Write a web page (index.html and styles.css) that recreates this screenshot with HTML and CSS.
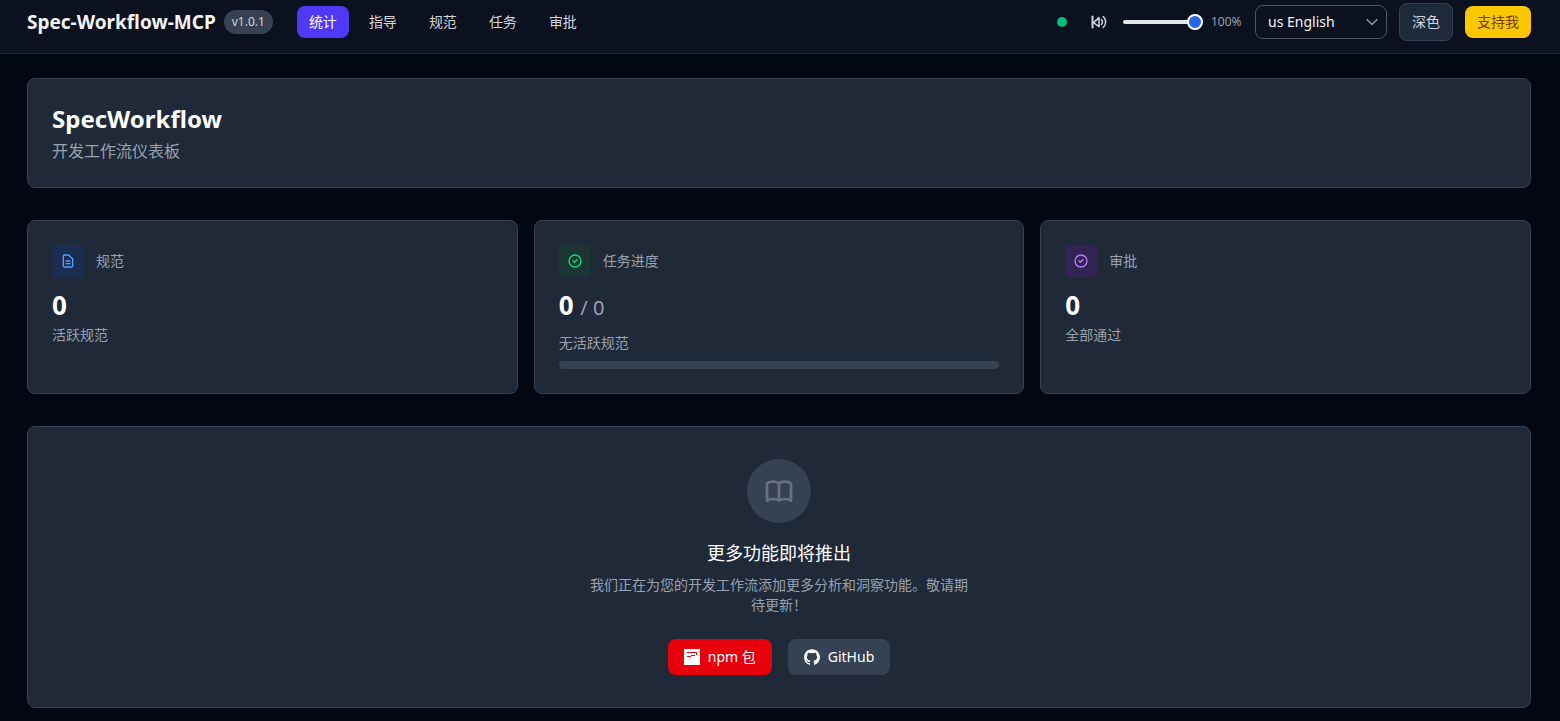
FILE: index.html
```html
<!DOCTYPE html>
<html lang="zh-CN">
<head>
<meta charset="utf-8">
<meta name="viewport" content="width=device-width, initial-scale=1">
<title>Spec-Workflow-MCP</title>
<link rel="stylesheet" href="styles.css">
</head>
<body>
<header class="topbar">
  <div class="brand">
    <span class="brand-name">Spec-Workflow-MCP</span>
    <span class="version">v1.0.1</span>
  </div>
  <nav class="nav">
    <a class="nav-link active" href="#stats">统计</a>
    <a class="nav-link" href="#steering">指导</a>
    <a class="nav-link" href="#specs">规范</a>
    <a class="nav-link" href="#tasks">任务</a>
    <a class="nav-link" href="#approvals">审批</a>
  </nav>
  <div class="tools">
    <span class="status-dot"></span>
    <div class="volume">
      <button class="mute" type="button" aria-label="静音">
        <svg width="16" height="16" viewBox="0 0 16 16" fill="none" stroke="currentColor" stroke-width="1.5" stroke-linecap="round" stroke-linejoin="round">
          <path d="M1.5 2.5v11" stroke-width="2"/>
          <path d="M2.5 8.6 8 3.6v9z"/>
          <path d="M10.3 5.5a3.6 3.6 0 0 1 0 5M12.2 2.5a7.4 7.4 0 0 1 0 11"/>
        </svg>
      </button>
      <input class="slider" type="range" min="0" max="100" value="100" aria-label="音量">
      <span class="percent">100%</span>
    </div>
    <div class="select-wrap">
      <select class="language" aria-label="语言">
        <option>us English</option>
      </select>
      <svg class="chevron" width="12" height="12" viewBox="0 0 12 12" fill="none" stroke="currentColor" stroke-width="1.2" stroke-linecap="round" stroke-linejoin="round"><path d="M1 3.5l5 5 5-5"/></svg>
    </div>
    <button class="theme" type="button">深色</button>
    <button class="support" type="button">支持我</button>
  </div>
</header>
<main class="content">
  <section class="card">
    <h1 class="project">SpecWorkflow</h1>
    <p class="subtitle">开发工作流仪表板</p>
  </section>
  <section class="stats">
    <article class="card">
      <div class="stat-head">
        <span class="stat-icon blue">
          <svg width="16" height="16" viewBox="0 0 24 24" fill="none" stroke="currentColor" stroke-width="2" stroke-linecap="round" stroke-linejoin="round"><path d="M9 12h6m-6 4h6m2 5H7a2 2 0 0 1-2-2V5a2 2 0 0 1 2-2h5.586a1 1 0 0 1 .707.293l5.414 5.414a1 1 0 0 1 .293.707V19a2 2 0 0 1-2 2z"/></svg>
        </span>
        <h2 class="stat-title">规范</h2>
      </div>
      <div class="value">0</div>
      <p class="note">活跃规范</p>
    </article>
    <article class="card">
      <div class="stat-head">
        <span class="stat-icon green">
          <svg width="16" height="16" viewBox="0 0 24 24" fill="none" stroke="currentColor" stroke-width="2" stroke-linecap="round" stroke-linejoin="round"><path d="M9 12l2 2 4-4m6 2a9 9 0 1 1-18 0 9 9 0 0 1 18 0z"/></svg>
        </span>
        <h2 class="stat-title">任务进度</h2>
      </div>
      <div class="value ratio">0 <span class="total">/ 0</span></div>
      <p class="note">无活跃规范</p>
      <div class="bar"></div>
    </article>
    <article class="card">
      <div class="stat-head">
        <span class="stat-icon purple">
          <svg width="16" height="16" viewBox="0 0 24 24" fill="none" stroke="currentColor" stroke-width="2" stroke-linecap="round" stroke-linejoin="round"><path d="M9 12l2 2 4-4m6 2a9 9 0 1 1-18 0 9 9 0 0 1 18 0z"/></svg>
        </span>
        <h2 class="stat-title">审批</h2>
      </div>
      <div class="value">0</div>
      <p class="note">全部通过</p>
    </article>
  </section>
  <section class="card soon">
    <div class="book">
      <svg width="32" height="32" viewBox="0 0 24 24" fill="none" stroke="currentColor" stroke-width="2" stroke-linecap="round" stroke-linejoin="round"><path d="M12 6.253v13m0-13C10.832 5.477 9.246 5 7.5 5S4.168 5.477 3 6.253v13C4.168 18.477 5.754 18 7.5 18s3.332.477 4.5 1.253m0-13C13.168 5.477 14.754 5 16.5 5c1.747 0 3.332.477 4.5 1.253v13C19.832 18.477 18.247 18 16.5 18c-1.746 0-3.332.477-4.5 1.253"/></svg>
    </div>
    <h2 class="soon-title">更多功能即将推出</h2>
    <p class="soon-text">我们正在为您的开发工作流添加更多分析和洞察功能。敬请期待更新！</p>
    <div class="links">
      <a class="link npm" href="#npm">
        <svg width="16" height="16" viewBox="0 0 16 16"><path fill="#fff" d="M0 0h16v16H0z"/><path fill="none" stroke="#e7000b" d="M3 3.5h9.5V6M7 6.5h4M3 7.5h4"/></svg>
        <span>npm 包</span>
      </a>
      <a class="link github" href="#github">
        <svg width="16" height="16" viewBox="0 0 24 24" fill="currentColor"><path d="M12 .297c-6.63 0-12 5.373-12 12 0 5.303 3.438 9.8 8.205 11.385.6.113.82-.258.82-.577 0-.285-.01-1.04-.015-2.04-3.338.724-4.042-1.61-4.042-1.61C4.422 18.07 3.633 17.7 3.633 17.7c-1.087-.744.084-.729.084-.729 1.205.084 1.838 1.236 1.838 1.236 1.07 1.835 2.809 1.305 3.495.998.108-.776.417-1.305.76-1.605-2.665-.3-5.466-1.332-5.466-5.93 0-1.31.465-2.38 1.235-3.22-.135-.303-.54-1.523.105-3.176 0 0 1.005-.322 3.3 1.23.96-.267 1.98-.399 3-.405 1.02.006 2.04.138 3 .405 2.28-1.552 3.285-1.23 3.285-1.23.645 1.653.24 2.873.12 3.176.765.84 1.23 1.91 1.23 3.22 0 4.61-2.805 5.625-5.475 5.92.42.36.81 1.096.81 2.22 0 1.606-.015 2.896-.015 3.286 0 .315.21.69.825.57C20.565 22.092 24 17.592 24 12.297c0-6.627-5.373-12-12-12"/></svg>
        <span>GitHub</span>
      </a>
    </div>
  </section>
</main>
</body>
</html>
```

FILE: styles.css
```css
* {
  box-sizing: border-box;
}

body {
  margin: 0;
  background: #030712;
  color: #fff;
  font: 14px/20px "Noto Sans", "Noto Sans CJK SC", sans-serif;
}

h1, h2, p {
  margin: 0;
}

a {
  text-decoration: none;
}

svg {
  display: block;
}

button, select, input {
  margin: 0;
  font: inherit;
}

.topbar {
  display: flex;
  align-items: center;
  padding: 3px 29px 12px 27px;
  background: #0b111e;
  border-bottom: 1px solid #1e2939;
}

.brand {
  display: flex;
  align-items: center;
  gap: 8px;
  margin-right: 24px;
}

.brand-name {
  color: #f3f4f6;
  font-size: 19px;
  font-weight: 700;
  line-height: 28px;
}

.version {
  padding: 4px 8px;
  border-radius: 12px;
  background: #364153;
  color: #d1d5dc;
  font-size: 12px;
  line-height: 16px;
}

.nav {
  display: flex;
  gap: 8px;
}

.nav-link {
  padding: 6px 12px;
  border-radius: 8px;
  color: #d1d5dc;
}

.nav-link.active {
  background: #4f39f6;
  color: #fff;
}

.tools {
  display: flex;
  align-items: center;
  gap: 12px;
  margin-left: auto;
}

.status-dot {
  width: 10px;
  height: 10px;
  margin-right: 12px;
  border-radius: 50%;
  background: #00bc7d;
}

.volume {
  display: flex;
  align-items: center;
  gap: 8px;
}

.mute {
  margin-right: 8px;
  padding: 0;
  border: 0;
  background: none;
  color: #d1d5dc;
}

.slider {
  width: 80px;
  height: 4px;
  border-radius: 2px;
  appearance: none;
  background: #e5e7eb;
}

.slider::-webkit-slider-thumb {
  width: 16px;
  height: 16px;
  border: 2px solid #fff;
  border-radius: 50%;
  appearance: none;
  background: #2563eb;
}

.percent {
  width: 32px;
  color: #99a1af;
  font-size: 12px;
  line-height: 16px;
}

.select-wrap {
  position: relative;
}

.language {
  display: block;
  width: 132px;
  height: 34px;
  padding: 0 32px 0 12px;
  border: 1px solid #4a5565;
  border-radius: 8px;
  appearance: none;
  background: transparent;
  color: #f3f4f6;
}

.chevron {
  position: absolute;
  top: 11px;
  right: 9px;
  color: #99a1af;
  pointer-events: none;
}

.theme {
  padding: 8px 12px;
  border: 1px solid #364153;
  border-radius: 8px;
  background: #1e2939;
  color: #d1d5dc;
}

.support {
  padding: 6px 12px;
  border: 0;
  border-radius: 8px;
  background: #fdc700;
  color: #733e0a;
}

.content {
  display: grid;
  gap: 32px;
  padding: 24px 29px 16px 27px;
}

.card {
  padding: 24px;
  border: 1px solid #364153;
  border-radius: 8px;
  background: #1f2937;
}

.project {
  margin-bottom: 4px;
  font-size: 24px;
  line-height: 32px;
}

.subtitle {
  color: #99a1af;
  font-size: 16px;
  line-height: 24px;
}

.stats {
  display: grid;
  grid-template-columns: repeat(3, 1fr);
  gap: 16px;
}

.stat-head {
  display: flex;
  align-items: center;
  gap: 12px;
  margin-bottom: 12px;
}

.stat-icon {
  padding: 8px;
  border-radius: 4px;
}

.blue {
  background: #1c2d53;
  color: #51a2ff;
}

.green {
  background: #1b3534;
  color: #05df72;
}

.purple {
  background: #322453;
  color: #c27aff;
}

.stat-title {
  color: #99a1af;
  font-size: 14px;
  font-weight: 400;
}

.value {
  margin-bottom: 4px;
  font-size: 26px;
  font-weight: 700;
  line-height: 32px;
}

.ratio {
  margin-bottom: 9px;
}

.total {
  color: #99a1af;
  font-size: 20px;
  font-weight: 400;
}

.note {
  color: #99a1af;
}

.bar {
  height: 8px;
  margin-top: 8px;
  border-radius: 4px;
  background: #364153;
}

.soon {
  display: flex;
  flex-direction: column;
  align-items: center;
  padding: 32px;
  text-align: center;
}

.book {
  margin-bottom: 16px;
  padding: 16px;
  border-radius: 50%;
  background: #364153;
  color: #6a7282;
}

.soon-title {
  margin-bottom: 8px;
  font-size: 18px;
  font-weight: 400;
  line-height: 28px;
}

.soon-text {
  max-width: 384px;
  margin-bottom: 24px;
  color: #99a1af;
}

.links {
  display: flex;
  gap: 16px;
}

.link {
  display: flex;
  align-items: center;
  gap: 8px;
  padding: 8px 16px;
  border-radius: 8px;
  color: #fff;
}

.npm {
  background: #e7000b;
}

.github {
  background: #364153;
}
```
